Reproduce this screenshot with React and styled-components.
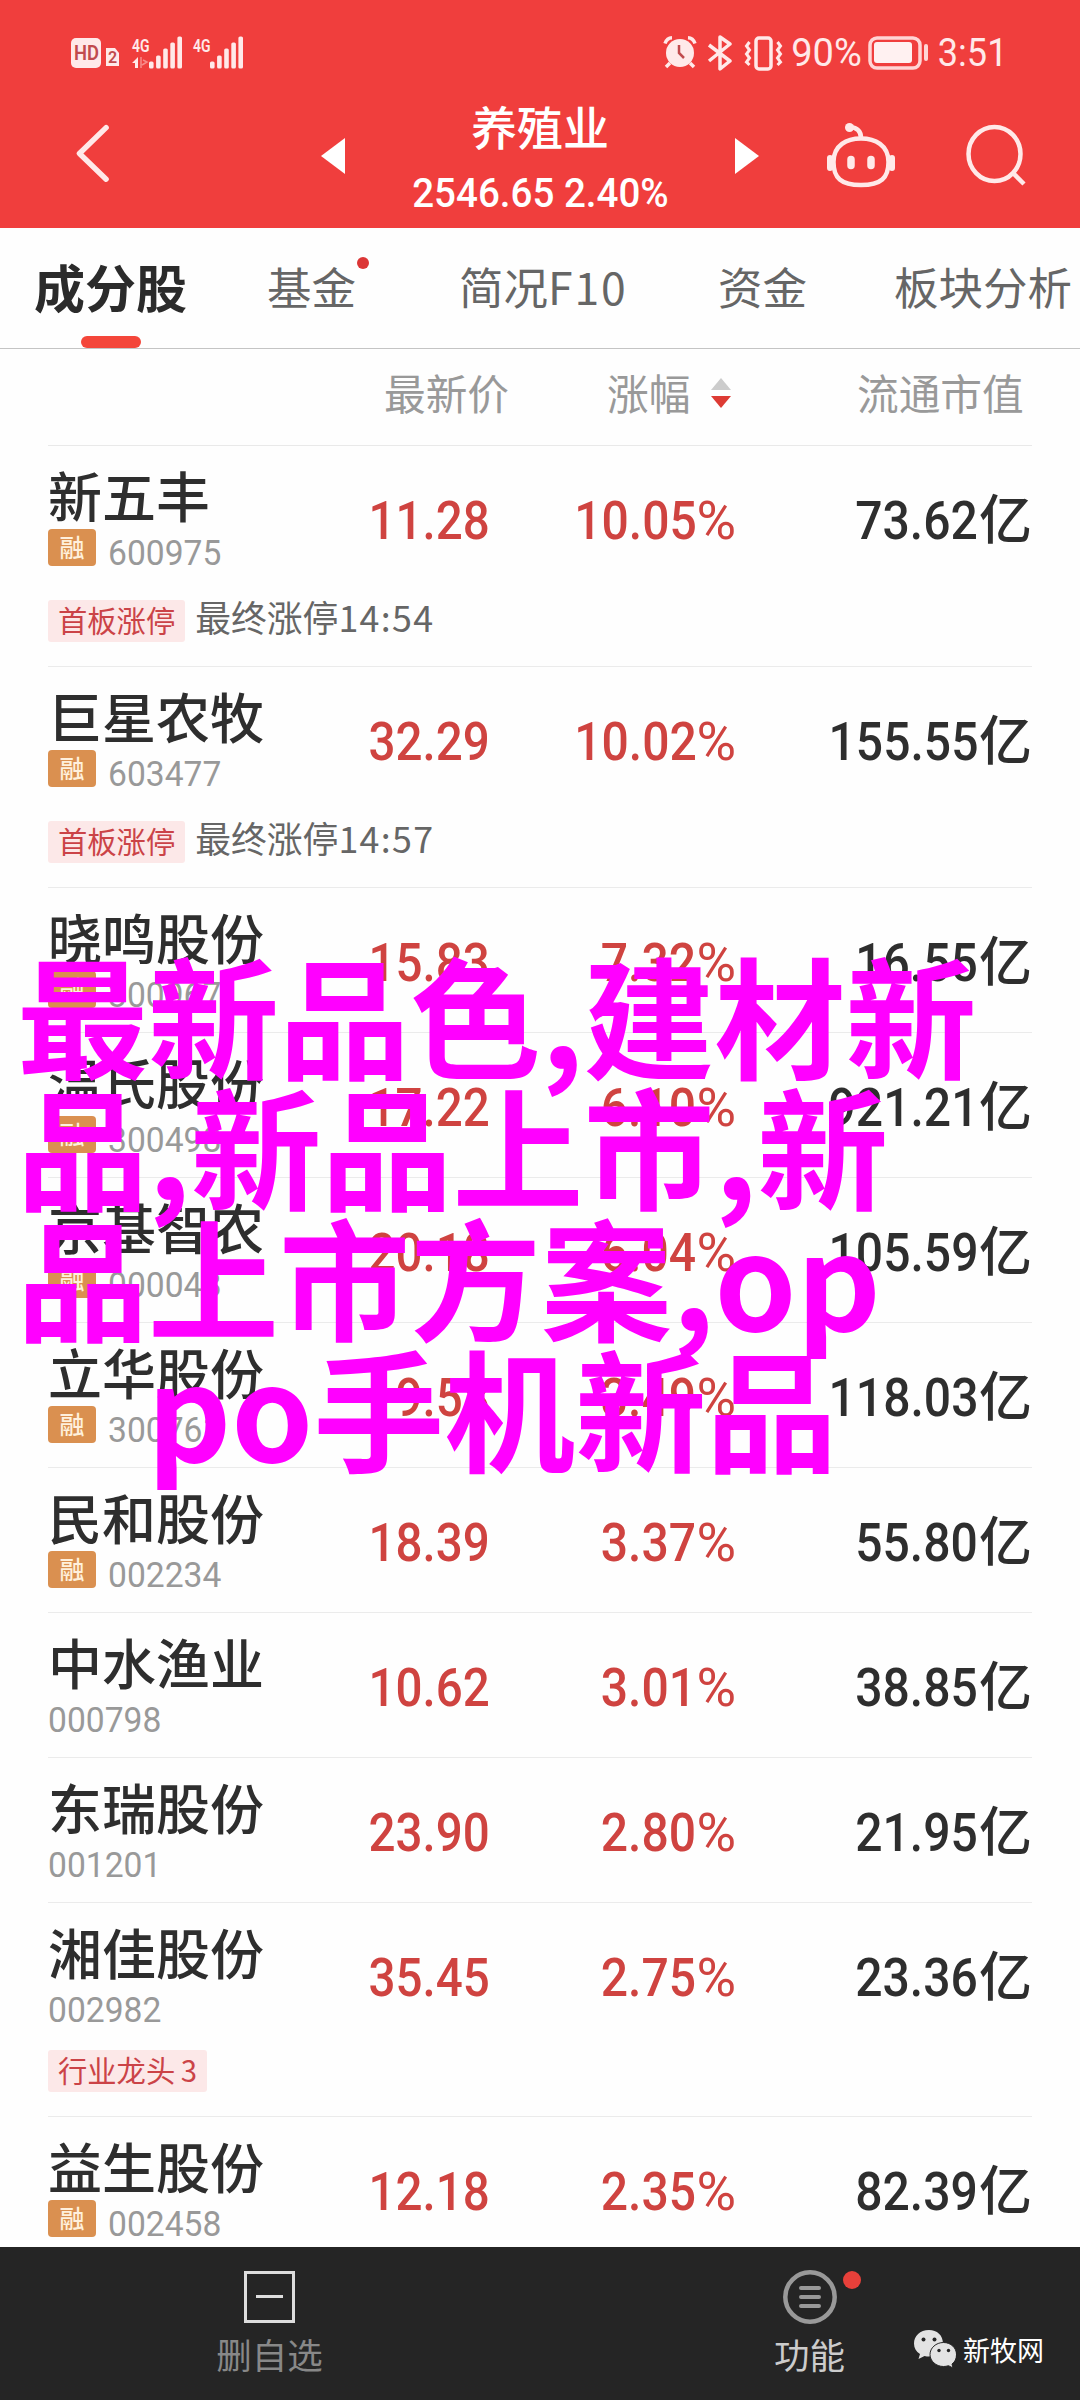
import React from "react";
import styled, { createGlobalStyle, css } from "styled-components";

const Global = createGlobalStyle`
  * { box-sizing: border-box; }
  body { margin: 0; background: #fff; }
`;

const cjk = `"Noto Sans CJK SC", sans-serif`;
const latin = `Roboto, "Noto Sans CJK SC", sans-serif`;

const Screen = styled.div`
  position: relative;
  width: 1080px;
  height: 2400px;
  overflow: hidden;
  display: flex;
  flex-direction: column;
  background: #fefefe;
  font-family: ${cjk};
  color: #2e2e2e;
  white-space: nowrap;
`;

const Header = styled.header`
  flex: none;
  height: 228px;
  background: #f03e3d;
  color: #fff;
  display: flex;
  flex-direction: column;
`;

const StatusBar = styled.div`
  height: 88px;
  padding: 35px 74px 0 70px;
  display: flex;
  justify-content: space-between;
  align-items: flex-start;
  color: #ffe9e9;
`;

const StatusGroup = styled.div`
  display: flex;
  align-items: center;
  height: 36px;
`;

const StatusText = styled.span`
  font: 400 38px/36px ${latin};
  width: ${(p) => p.$w}px;
  display: flex;
  justify-content: center;
`;

const Spacer = styled.span`
  width: ${(p) => p.$w}px;
`;

const SignalIcon = styled.svg`
  overflow: visible;
`;

const NavBar = styled.div`
  height: 140px;
  display: grid;
  grid-template-columns: 74px 38px 209px 24px 390px 24px 67px 70px 70px 60px 54px;
  align-items: center;
`;

const Cell = styled.div`
  display: flex;
  grid-column: ${(p) => p.$col};
  padding-bottom: ${(p) => p.$lift || 0}px;
`;

const Title = styled.div`
  grid-column: 5;
  height: 140px;
  padding-top: 14px;
  display: flex;
  flex-direction: column;
  align-items: center;
`;

const TitleName = styled.div`
  font: 500 46px/46px ${cjk};
`;

const Squeeze = styled.span`
  display: inline-block;
  transform: scaleX(${(p) => p.$x});
  transform-origin: ${(p) => p.$from || "center"};
`;

const Quote = styled.div`
  margin-top: 23px;
  font: 500 41px/44px ${latin};
`;

const Tabs = styled.nav`
  flex: none;
  height: 121px;
  border-bottom: 1px solid #c4c4c4;
  display: grid;
  grid-template-columns: 267px 192px 259px 176px 186px;
`;

const Tab = styled.div`
  display: flex;
  align-items: flex-start;
  padding-top: 26px;
  font: 400 44.5px/64px ${cjk};
  color: #666;
  ${(p) => p.$active && css`
    position: relative;
    padding-left: 34px;
    font-weight: 700;
    font-size: 51px;
    color: #2b2b2b;
    &::after {
      content: "";
      position: absolute;
      left: 81px;
      bottom: 0;
      width: 60px;
      height: 12px;
      border-radius: 6px;
      background: #f4463a;
    }
  `}
`;

const Spread = styled.span`
  letter-spacing: ${(p) => p.$by}px;
`;

const TabDot = styled.i`
  width: 12px;
  height: 12px;
  margin: 3px 0 0 1px;
  border-radius: 50%;
  background: #dc3636;
`;

const Columns = styled.div`
  flex: none;
  height: 97px;
  margin: 0 48px;
  border-bottom: 1px solid #e9e9e9;
  display: grid;
  grid-template-columns: 336px 223px 104px 146px 1fr;
  padding-top: 13px;
  font: 400 41.7px/60px ${cjk};
  color: #999;
`;

const Sorter = styled.svg`
  margin-top: 16px;
`;

const List = styled.main`
  flex: 1;
  min-height: 0;
  overflow: hidden;
  padding: 0 48px;
`;

const Row = styled.section`
  height: ${(p) => p.$h}px;
  border-bottom: 1px solid #ebebeb;
`;

const RowMain = styled.div`
  display: grid;
  grid-template-columns: 260px 182px 246px 1fr;
`;

const Name = styled.div`
  margin-top: 19px;
  height: 64px;
  font: 500 54px/60px ${cjk};
`;

const CodeLine = styled.div`
  height: 37px;
  display: flex;
  align-items: flex-start;
`;

const Badge = styled.span`
  width: 48px;
  height: 37px;
  margin-right: 12px;
  border-radius: 4px;
  background: #da9050;
  color: #fff0dc;
  font: 500 25px/35px ${cjk};
  text-align: center;
`;

const Code = styled.span`
  font: 400 35px/49px ${latin};
  color: #999;
`;

const Figure = styled.div`
  display: flex;
  justify-content: flex-end;
  padding-top: 42px;
  font: 500 54px/66px ${latin};
  color: ${(p) => (p.$up ? "#cf4340" : "#2e2e2e")};
`;

const Percent = styled.span`
  font-weight: 400;
`;

const Unit = styled.span`
  font: 500 53px/56px ${cjk};
  margin-left: 1px;
`;

const Tags = styled.div`
  display: flex;
  margin-top: ${(p) => (p.$tight ? 27 : 34)}px;
  height: 42px;
`;

const Tag = styled.span`
  height: 42px;
  padding: 0 10px;
  border-radius: 3px;
  background: #fce8e8;
  color: #cb4347;
  font: 400 29.3px/38px ${cjk};
  word-spacing: -1px;
`;

const Note = styled.span`
  margin-left: 10px;
  font: 400 35.8px/33px ${cjk};
  color: #666;
`;

const Footer = styled.footer`
  flex: none;
  height: 153px;
  background: #252525;
  display: grid;
  grid-template-columns: 540px 374px 1fr;
`;

const Action = styled.div`
  display: flex;
  flex-direction: column;
  align-items: center;
  padding-top: 22px;
  color: ${(p) => p.$color};
  width: 539px;
  font: 400 35.5px/50px ${cjk};
`;

const IconBox = styled.div`
  position: relative;
  height: 56px;
  margin-bottom: 4px;
`;

const AlertDot = styled.i`
  position: absolute;
  left: 60px;
  top: 2px;
  width: 18px;
  height: 18px;
  border-radius: 50%;
  background: #e8403a;
`;

const Source = styled.div`
  position: relative;
  display: flex;
  padding-top: 83px;
  gap: 7px;
  font: 400 27px/40px ${cjk};
  color: #fff;
`;

const Caption = styled.div`
  position: absolute;
  left: 17px;
  top: 947px;
  font: 700 131px/131px ${cjk};
  color: #ff00ff;
`;

const CaptionLine = styled.div`
  padding-left: ${(p) => p.$indent || 0}px;
`;

const Signal = ({ arrows }) => (
  <SignalIcon width={arrows ? 51 : 52} height="36" viewBox={arrows ? "0 0 51 36" : "0 0 52 36"} fill="#ffe9e9">
    <text x="0" y="16.5" fontFamily="Roboto, sans-serif" fontWeight="600" fontSize="19" textLength="17.5" lengthAdjust="spacingAndGlyphs">4G</text>
    {arrows && <path d="M0 28l6-6v11H3v-5z" />}
    {arrows && <path d="M9 22v11M10 30l5-3-4-2" opacity=".45" stroke="#ffe9e9" strokeWidth="1.5" fill="none" />}
    {[0, 1, 2, 3, 4].map((i) => (
      <rect key={i} x={17 + i * 7.1} y={[26.5, 20.5, 13.5, 7.5, 1.5][i]} width="4.6" height={[7, 13, 20, 26, 32][i]} rx="1.6" />
    ))}
  </SignalIcon>
);

const stocks = [
  { name: "新五丰", code: "600975", margin: true, price: "11.28", pct: "10.05", cap: "73.62", tag: "首板涨停", note: "最终涨停", time: "14:54", h: 221 },
  { name: "巨星农牧", code: "603477", margin: true, price: "32.29", pct: "10.02", cap: "155.55", tag: "首板涨停", note: "最终涨停", time: "14:57", h: 221 },
  { name: "晓鸣股份", code: "300967", margin: true, price: "15.83", pct: "7.32", cap: "16.55", h: 145 },
  { name: "温氏股份", code: "300498", margin: true, price: "17.22", pct: "6.10", cap: "921.21", h: 145 },
  { name: "京基智农", code: "000048", margin: true, price: "20.18", pct: "6.04", cap: "105.59", h: 145 },
  { name: "立华股份", code: "300761", margin: true, price: "19.58", pct: "3.49", cap: "118.03", h: 145 },
  { name: "民和股份", code: "002234", margin: true, price: "18.39", pct: "3.37", cap: "55.80", h: 145 },
  { name: "中水渔业", code: "000798", price: "10.62", pct: "3.01", cap: "38.85", h: 145 },
  { name: "东瑞股份", code: "001201", price: "23.90", pct: "2.80", cap: "21.95", h: 145 },
  { name: "湘佳股份", code: "002982", price: "35.45", pct: "2.75", cap: "23.36", tag: "行业龙头 3", h: 214 },
  { name: "益生股份", code: "002458", margin: true, price: "12.18", pct: "2.35", cap: "82.39", h: 145 },
];

const Stock = ({ s }) => (
  <Row $h={s.h}>
    <RowMain>
      <div>
        <Name>{s.name}</Name>
        <CodeLine>
          {s.margin && <Badge>融</Badge>}
          <Code><Squeeze $x={0.96} $from="left">{s.code}</Squeeze></Code>
        </CodeLine>
      </div>
      <Figure $up><Squeeze $x={0.88} $from="right">{s.price}</Squeeze></Figure>
      <Figure $up><Squeeze $x={0.89} $from="right">{s.pct}</Squeeze><Percent>%</Percent></Figure>
      <Figure><Squeeze $x={0.89} $from="right">{s.cap}</Squeeze><Unit>亿</Unit></Figure>
    </RowMain>
    {s.tag && (
      <Tags $tight={!s.margin}>
        <Tag>{s.tag}</Tag>
        {s.note && <Note>{s.note}<Spread $by={1.3}>{s.time}</Spread></Note>}
      </Tags>
    )}
  </Row>
);

export default function App() {
  return (
    <Screen>
      <Global />
      <Header>
        <StatusBar>
          <StatusGroup>
            <svg width="50" height="36" viewBox="0 0 50 36">
              <rect x="1" y="3" width="30" height="30" rx="5" fill="#ffe9e9" />
              <text x="4" y="24.500" fontFamily="Roboto, sans-serif" fontWeight="600" fontSize="20" textLength="25" lengthAdjust="spacingAndGlyphs" fill="#c14a4d">HD</text>
              <path d="M36 13h9l4 5v13H36z" fill="#ffe9e9" />
              <text x="38" y="28" fontFamily="Roboto, sans-serif" fontWeight="600" fontSize="16" fill="#c14a4d">2</text>
            </svg>
            <Spacer $w={12} />
            <Signal arrows />
            <Spacer $w={10} />
            <Signal />
          </StatusGroup>
          <StatusGroup>
            <svg width="34" height="36" viewBox="0 0 34 36" fill="#ffe9e9" stroke="#ffe9e9">
              <circle cx="17" cy="18" r="14" stroke="none" />
              <path d="M2 8.500Q4 3 9 2.800M32 8.500Q30 3 25 2.800M7 28l-4 4M27 28l4 4" strokeWidth="3.500" fill="none" />
              <path d="M16 10v8l5 5" stroke="#c14a4d" strokeWidth="2.500" fill="none" />
            </svg>
            <Spacer $w={10} />
            <svg width="26" height="36" viewBox="0 0 26 36" fill="none" stroke="#ffe9e9" strokeWidth="3.500">
              <path d="M2 10l21 16-10 8V2l10 7L2 26" strokeLinejoin="round" />
            </svg>
            <Spacer $w={11} />
            <svg width="40" height="36" viewBox="0 0 40 36" fill="none" stroke="#ffe9e9" strokeWidth="3.500">
              <rect x="12" y="3" width="15" height="31" rx="3" />
              <path d="M5.500 7l-3 4 3 4-3 4 3 4-3 4 3 3M33.500 7l3 4-3 4 3 4-3 4 3 4-3 3" strokeWidth="3" />
            </svg>
            <Spacer $w={6} />
            <StatusText $w={73}><Squeeze $x={1}>90%</Squeeze></StatusText>
            <Spacer $w={5} />
            <svg width="62" height="36" viewBox="0 0 62 36" fill="none">
              <rect x="2" y="3" width="50" height="30" rx="7" stroke="#ffd5d5" strokeWidth="3.500" />
              <rect x="6" y="7" width="38" height="21" rx="3" fill="#fff1f1" />
              <rect x="56" y="9" width="4" height="17" rx="2" fill="#ffd5d5" />
            </svg>
            <Spacer $w={9} />
            <StatusText $w={67}><Squeeze $x={0.95}>3:51</Squeeze></StatusText>
          </StatusGroup>
        </StatusBar>
        <NavBar>
          <Cell $col={2} $lift={10}>
            <svg width="42" height="70" viewBox="0 0 42 70" fill="none" stroke="#ffe9e9" strokeWidth="6" strokeLinecap="round" strokeLinejoin="round">
              <path d="M35.500 7L6 35.500 35.500 64" />
            </svg>
          </Cell>
          <Cell $col={4} $lift={4}>
            <svg width="24" height="36" viewBox="0 0 24 36"><path d="M24 0v36L0 18z" fill="#fff" /></svg>
          </Cell>
          <Title>
            <TitleName>养殖业</TitleName>
            <Quote><Squeeze $x={0.94}>2546.65 2.40%</Squeeze></Quote>
          </Title>
          <Cell $col={6} $lift={4}>
            <svg width="24" height="36" viewBox="0 0 24 36"><path d="M0 0v36l24-18z" fill="#fff" /></svg>
          </Cell>
          <Cell $col={8} $lift={7}>
            <svg width="70" height="66" viewBox="0 0 70 66" fill="none" stroke="#ffe9e9" strokeWidth="4.500">
              <path d="M35 16.500C49 16.500 62.500 23 62.500 40C62.500 56 55 63 35 63S7.500 56 7.500 40C7.500 23 21 16.500 35 16.500z" />
              <path d="M35 16Q35 6 24 5" />
              <circle cx="23.500" cy="5.500" r="4.500" fill="#ffe9e9" stroke="none" />
              <path d="M4 36v10M66 36v10" strokeWidth="6" strokeLinecap="round" />
              <path d="M25 37.500v6M45 37.500v6" strokeWidth="7.500" strokeLinecap="round" />
            </svg>
          </Cell>
          <Cell $col={10} $lift={6}>
            <svg width="60" height="62" viewBox="0 0 60 62" fill="none" stroke="#ffe9e9" strokeWidth="4.500">
              <ellipse cx="28.500" cy="30" rx="26" ry="27" />
              <path d="M46 48l12 12" />
            </svg>
          </Cell>
        </NavBar>
      </Header>

      <Tabs>
        <Tab $active>成分股</Tab>
        <Tab>基金<TabDot /></Tab>
        <Tab>简况<Spread $by={1.8}>F10</Spread></Tab>
        <Tab>资金</Tab>
        <Tab>板块分析</Tab>
      </Tabs>

      <Columns>
        <span />
        <span>最新价</span>
        <span>涨幅</span>
        <Sorter width="20" height="30" viewBox="0 0 20 30">
          <path d="M0 12L10 0l10 12z" fill="#ccc" />
          <path d="M0 18h20L10 30z" fill="#dd3b34" />
        </Sorter>
        <span>流通市值</span>
      </Columns>

      <List>
        {stocks.map((s) => <Stock key={s.code} s={s} />)}
      </List>

      <Footer>
        <Action $color="#888">
          <IconBox>
            <svg width="51" height="56" viewBox="0 0 51 56" fill="none" stroke="#ddd" strokeWidth="3">
              <rect x="1.500" y="3.500" width="48" height="49" />
              <path d="M12 27.500h27" />
            </svg>
          </IconBox>
          删自选
        </Action>
        <Action $color="#ccc">
          <IconBox>
            <svg width="54" height="56" viewBox="0 0 54 56" fill="none" stroke="#999" strokeWidth="4.500">
              <circle cx="27" cy="28" r="24.700" />
              <path d="M18 19h18M18 28h18M18 37h18" strokeLinecap="round" strokeWidth="4" />
            </svg>
            <AlertDot />
          </IconBox>
          功能
        </Action>
        <Source>
          <svg width="42" height="38" viewBox="0 0 42 38">
            <path d="M15 0C6 0 0 6 0 13.500c0 4.500 2 8 6 10.500l-1.500 5 6-3q2 .6 5 .6L29 14C29 5 23 0 15 0z" fill="#e3e3e3" />
            <path d="M29.500 12.500C22 12.500 16 18 16 24.500s6 12 13.500 12q2.500 0 5-.8l4.500 2.300-1-4c3-2 4.500-5.500 4.500-9.500 0-6.500-5.500-12-13-12z" fill="#e3e3e3" stroke="#252525" />
            <g fill="#252525"><circle cx="9.500" cy="9.500" r="2" /><circle cx="20.500" cy="9.500" r="2" /><circle cx="25" cy="20.500" r="1.700" /><circle cx="34.500" cy="20.500" r="1.700" /></g>
          </svg>
          新牧网
        </Source>
      </Footer>

      <Caption>
        <CaptionLine>最新品色,建材新</CaptionLine>
        <CaptionLine>品,新品上市,新</CaptionLine>
        <CaptionLine>品上市方案,op</CaptionLine>
        <CaptionLine $indent={130}>po手机新品</CaptionLine>
      </Caption>
    </Screen>
  );
}
